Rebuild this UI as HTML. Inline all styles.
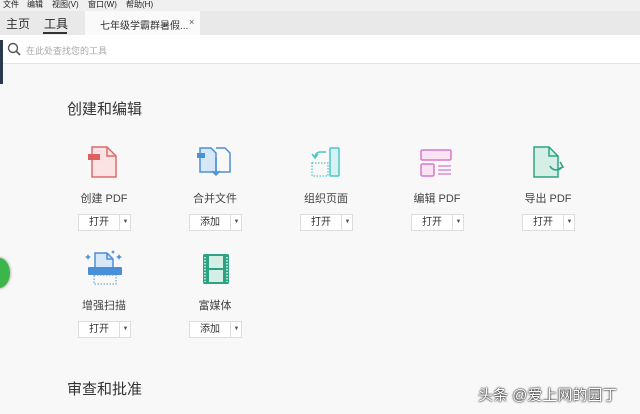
<!DOCTYPE html>
<html><head><meta charset="utf-8"><style>
*{margin:0;padding:0;box-sizing:border-box}
body{width:640px;height:414px;overflow:hidden;background:#f8f8f8;font-family:"Liberation Sans","Noto Sans CJK SC",sans-serif;position:relative;color:#333}
.menu{position:absolute;top:0;left:0;width:640px;height:11px;background:#f0f0f0;font-size:8px;line-height:10px;color:#222}
.menu span{position:absolute;top:0}
.tabs{position:absolute;top:11px;left:0;width:640px;height:24px;background:#e9e9e9}
.search{position:absolute;top:35px;left:0;width:640px;height:29px;background:#fff;border-bottom:1px solid #e2e2e2}
.abs{position:absolute;white-space:nowrap}
.h{font-size:15px;color:#333}
.lbl{font-size:11px;color:#444;width:110px;text-align:center}
.btn{position:absolute;width:53px;height:17px;border:1px solid #ddd;background:#fff;font-size:10px;line-height:15px;color:#333}
.btn .a{position:absolute;left:0;width:40px;text-align:center}
.btn .b{position:absolute;left:40px;top:0;width:12px;height:15px;border-left:1px solid #ddd;font-size:6px;text-align:center;color:#555}
</style></head><body>
<div class="menu"><span style="left:3px">文件</span><span style="left:27px">编辑</span><span style="left:52px">视图(V)</span><span style="left:88px">窗口(W)</span><span style="left:126px">帮助(H)</span></div>
<div class="tabs">
<div class="abs" style="left:6px;top:4px;font-size:12px;color:#333">主页</div>
<div class="abs" style="left:44px;top:4px;font-size:12px;color:#222">工具</div>
<div class="abs" style="left:43px;top:21px;width:24px;height:2px;background:#333"></div>
<div class="abs" style="left:85px;top:0;width:115px;height:24px;background:#fafafa"></div>
<div class="abs" style="left:100px;top:6px;font-size:10px;color:#333">七年级学霸群暑假...</div>
<div class="abs" style="left:189px;top:6px;font-size:9px;color:#555">×</div>
</div>
<div class="search">
<svg class="abs" style="left:7px;top:7px" width="14" height="14" viewBox="0 0 14 14"><circle cx="6" cy="6" r="4.5" fill="none" stroke="#555" stroke-width="1.4"/><path d="M9.3 9.3L13 13" stroke="#555" stroke-width="1.6"/></svg>
<div class="abs" style="left:26px;top:9px;font-size:9px;color:#aaa">在此处查找您的工具</div>
</div>
<div class="abs" style="left:0;top:40px;width:3px;height:44px;background:#2b3a4a"></div>
<div class="abs" style="left:-12px;top:258px;width:22px;height:30px;border-radius:50%;background:#3cb54a;box-shadow:0 0 3px #888"></div>

<div class="abs h" style="left:67px;top:98px">创建和编辑</div>
<div class="abs h" style="left:67px;top:378px">审查和批准</div>

<!-- icons row 1 -->
<svg class="abs" style="left:86px;top:145px" width="36" height="34" viewBox="0 0 36 34"><path d="M6 2h15l9 9v21H6z" fill="#fbe3e3" stroke="#e06a6a" stroke-width="1.5"/><path d="M21 2v9h9" fill="none" stroke="#e06a6a" stroke-width="1.5"/><rect x="2" y="9" width="12" height="6" fill="#e06060"/></svg>
<svg class="abs" style="left:194px;top:145px" width="42" height="36" viewBox="0 0 42 36"><path d="M6 3h11l5 5v19H6z" fill="#d6e8f7" stroke="#4a90d9" stroke-width="1.5"/><path d="M22 3h9l5 5v19H22" fill="none" stroke="#4a90d9" stroke-width="1.5"/><rect x="3" y="8" width="8" height="5" fill="#4a90d9"/><path d="M22 12v18M18 26l4 4 4-4" fill="none" stroke="#4a90d9" stroke-width="1.5"/></svg>
<svg class="abs" style="left:308px;top:145px" width="36" height="34" viewBox="0 0 36 34"><rect x="22" y="3" width="9" height="28" rx="1" fill="#d8f2f2" stroke="#4cc6c6" stroke-width="1.5"/><rect x="4" y="18" width="16" height="13" fill="none" stroke="#4cc6c6" stroke-width="1.2" stroke-dasharray="1.5 1.5"/><path d="M18 7h-6a5 5 0 0 0-5 5M4 9l3 4 3-4" fill="none" stroke="#4cc6c6" stroke-width="1.5"/></svg>
<svg class="abs" style="left:419px;top:148px" width="36" height="30" viewBox="0 0 36 30"><rect x="2" y="2" width="30" height="10" rx="1.5" fill="#fbe3f4" stroke="#d479c9" stroke-width="1.5"/><rect x="2" y="16" width="13" height="12" rx="1.5" fill="#fbe3f4" stroke="#d479c9" stroke-width="1.5"/><path d="M19 18h13M19 22h13M19 26h13" stroke="#d479c9" stroke-width="1.3"/></svg>
<svg class="abs" style="left:530px;top:145px" width="38" height="34" viewBox="0 0 38 34"><path d="M4 2h15l9 9v21H4z" fill="#d5efe7" stroke="#2ea383" stroke-width="1.5"/><path d="M19 2v9h9" fill="none" stroke="#2ea383" stroke-width="1.5"/><path d="M20 21a7 7 0 0 0 12 1M30 17l3 5-5 2" fill="none" stroke="#2ea383" stroke-width="1.6"/></svg>

<div class="abs lbl" style="left:49px;top:190px">创建 PDF</div>
<div class="abs lbl" style="left:160px;top:190px">合并文件</div>
<div class="abs lbl" style="left:271px;top:190px">组织页面</div>
<div class="abs lbl" style="left:382px;top:190px">编辑 PDF</div>
<div class="abs lbl" style="left:493px;top:190px">导出 PDF</div>

<div class="btn" style="left:78px;top:214px"><span class="a">打开</span><span class="b">▼</span></div>
<div class="btn" style="left:189px;top:214px"><span class="a">添加</span><span class="b">▼</span></div>
<div class="btn" style="left:300px;top:214px"><span class="a">打开</span><span class="b">▼</span></div>
<div class="btn" style="left:411px;top:214px"><span class="a">打开</span><span class="b">▼</span></div>
<div class="btn" style="left:522px;top:214px"><span class="a">打开</span><span class="b">▼</span></div>

<!-- row 2 icons -->
<svg class="abs" style="left:85px;top:250px" width="40" height="36" viewBox="0 0 40 36"><path d="M3 4l1 2 2 1-2 1-1 2-1-2-2-1 2-1zM34 4l1 2 2 1-2 1-1 2-1-2-2-1 2-1zM28 0l.7 1.3 1.3.7-1.3.7-.7 1.3-.7-1.3L26 2l1.3-.7z" fill="#4a90d9"/><path d="M10 3h12l6 6v10H10z" fill="#d6e8f7" stroke="#4a90d9" stroke-width="1.5"/><path d="M22 3v6h6" fill="none" stroke="#4a90d9" stroke-width="1.5"/><rect x="3" y="17" width="34" height="8" rx="1" fill="#4a90d9"/><rect x="9" y="25" width="22" height="9" fill="none" stroke="#4a90d9" stroke-width="1" stroke-dasharray="1.5 1.5"/></svg>
<svg class="abs" style="left:201px;top:252px" width="30" height="34" viewBox="0 0 30 34"><rect x="2" y="2" width="26" height="30" rx="1.5" fill="#2ea383"/><rect x="8" y="4" width="14" height="12" fill="#d5efe7"/><rect x="8" y="18" width="14" height="12" fill="#d5efe7"/><path d="M4 5v25M26 5v25" stroke="#fff" stroke-width="1.3" stroke-dasharray="1.5 1.5"/></svg>

<div class="abs lbl" style="left:49px;top:297px">增强扫描</div>
<div class="abs lbl" style="left:160px;top:297px">富媒体</div>
<div class="btn" style="left:78px;top:321px"><span class="a">打开</span><span class="b">▼</span></div>
<div class="btn" style="left:189px;top:321px"><span class="a">添加</span><span class="b">▼</span></div>

<div class="abs" style="left:478px;top:384px;font-size:15px;color:#fff;text-shadow:0 0 2px #000,0 0 1px #000">头条 @爱上网的园丁</div>
</body></html>
